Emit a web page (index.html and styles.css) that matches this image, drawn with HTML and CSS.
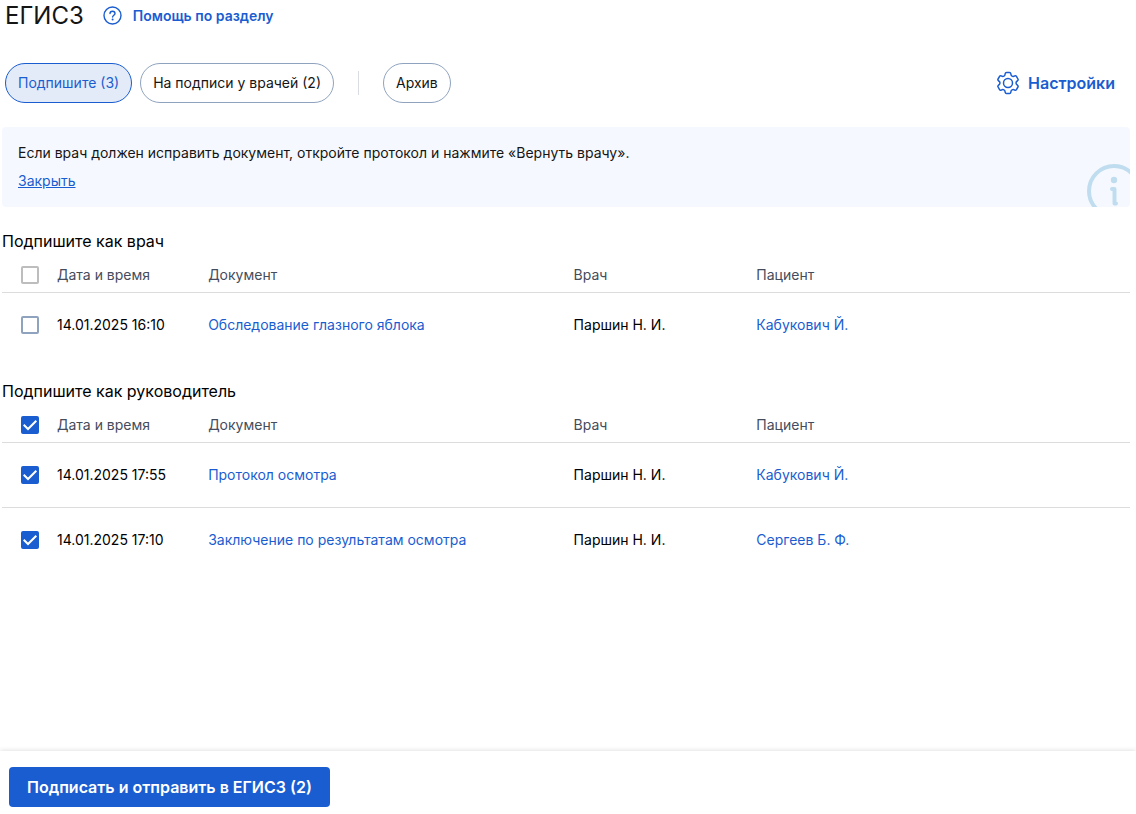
FILE: index.html
```html
<!DOCTYPE html>
<html lang="ru">
<head>
<meta charset="utf-8">
<meta name="viewport" content="width=device-width, initial-scale=1">
<title>ЕГИСЗ</title>
<link rel="stylesheet" href="styles.css">
</head>
<body>
<main class="content">
  <header class="page-head">
    <h1 class="title">ЕГИСЗ</h1>
    <a class="help" href="#help">
      <svg class="help-icon" viewBox="0 0 20 20" aria-hidden="true"><circle cx="9.500" cy="9.500" r="8.500"/><path d="M7 7.600C7 6.200 8.100 5.300 9.500 5.300s2.500.9 2.500 2.200c0 1.700-2.400 1.800-2.400 3.500"/><circle class="dot" cx="9.600" cy="13.500" r="1"/></svg>
      Помощь по разделу
    </a>
  </header>

  <div class="toolbar">
    <nav class="tabs">
      <button class="tab tab-active" type="button">Подпишите (3)</button>
      <button class="tab" type="button">На подписи у врачей (2)</button>
      <span class="divider"></span>
      <button class="tab" type="button">Архив</button>
    </nav>
    <button class="settings" type="button">
      <svg class="gear" viewBox="-12 -12 24 24" aria-hidden="true"><path d="M-1.500-10.600H1.500Q2.600-10.600 2.800-9.400 2.800-7.600 4-6.930 5.180-6.220 6.740-7.120 7.880-7.550 8.430-6.600L9.930-4Q10.480-3.050 9.540-2.270 7.980-1.370 8 0 7.980 1.370 9.540 2.270 10.480 3.050 9.930 4L8.430 6.600Q7.880 7.550 6.740 7.120 5.180 6.220 4 6.930 2.800 7.600 2.800 9.400 2.600 10.600 1.500 10.600H-1.500Q-2.600 10.600-2.800 9.400-2.800 7.600-4 6.930-5.180 6.220-6.740 7.120-7.880 7.550-8.430 6.600L-9.930 4Q-10.480 3.050-9.540 2.270-7.980 1.370-8 0-7.980-1.370-9.540-2.270-10.480-3.050-9.930-4L-8.430-6.600Q-7.880-7.550-6.740-7.120-5.180-6.220-4-6.930-2.800-7.600-2.800-9.400-2.600-10.600-1.500-10.600Z"/><circle r="4.500"/></svg>
      Настройки
    </button>
  </div>

  <section class="notice">
    <p class="notice-text">Если врач должен исправить документ, откройте протокол и нажмите «Вернуть врачу».</p>
    <a class="notice-close" href="#close">Закрыть</a>
    <svg class="notice-icon" viewBox="0 0 54 54" aria-hidden="true"><circle cx="27" cy="27" r="25"/><circle class="dot" cx="27" cy="16" r="3.200"/><path d="M25 25H27.500v14.500H29"/></svg>
  </section>

  <section class="group">
    <h2 class="group-title">Подпишите как врач</h2>
    <table class="docs">
      <colgroup><col class="col-check"><col class="col-date"><col class="col-doc"><col class="col-doctor"><col class="col-patient"></colgroup>
      <thead>
        <tr><th><input class="check" type="checkbox" disabled aria-label="Выбрать все документы врача"></th><th>Дата и время</th><th>Документ</th><th>Врач</th><th>Пациент</th></tr>
      </thead>
      <tbody>
        <tr><td><input class="check" type="checkbox" aria-label="Обследование глазного яблока"></td><td>14.01.2025 16:10</td><td><a class="link" href="#doc1">Обследование глазного яблока</a></td><td>Паршин Н. И.</td><td><a class="link" href="#patient1">Кабукович Й.</a></td></tr>
      </tbody>
    </table>
  </section>

  <section class="group">
    <h2 class="group-title">Подпишите как руководитель</h2>
    <table class="docs">
      <colgroup><col class="col-check"><col class="col-date"><col class="col-doc"><col class="col-doctor"><col class="col-patient"></colgroup>
      <thead>
        <tr><th><input class="check" type="checkbox" checked aria-label="Выбрать все документы руководителя"></th><th>Дата и время</th><th>Документ</th><th>Врач</th><th>Пациент</th></tr>
      </thead>
      <tbody>
        <tr><td><input class="check" type="checkbox" checked aria-label="Протокол осмотра"></td><td>14.01.2025 17:55</td><td><a class="link" href="#doc2">Протокол осмотра</a></td><td>Паршин Н. И.</td><td><a class="link" href="#patient1">Кабукович Й.</a></td></tr>
        <tr><td><input class="check" type="checkbox" checked aria-label="Заключение по результатам осмотра"></td><td>14.01.2025 17:10</td><td><a class="link" href="#doc3">Заключение по результатам осмотра</a></td><td>Паршин Н. И.</td><td><a class="link" href="#patient2">Сергеев Б. Ф.</a></td></tr>
      </tbody>
    </table>
  </section>
</main>
<footer class="footer">
  <button class="submit" type="button">Подписать и отправить в ЕГИСЗ (2)</button>
</footer>
</body>
</html>
```
FILE: styles.css
```css
* {
  box-sizing: border-box;
}

body {
  margin: 0;
  min-height: 100vh;
  display: flex;
  flex-direction: column;
  background: #fff;
  color: #000;
  font-family: Inter, "Liberation Sans", sans-serif;
  font-size: 14px;
  line-height: 20px;
}

button {
  font: inherit;
  cursor: pointer;
}

.content {
  flex: 1;
  padding: 0 6px 0 2px;
}

.page-head {
  display: flex;
  align-items: center;
  gap: 19px;
  height: 31px;
  padding-left: 3px;
}

.title {
  margin: 0;
  font-size: 24px;
  line-height: 30px;
  font-weight: 400;
  color: #151515;
}

.help {
  display: flex;
  align-items: center;
  gap: 10px;
  color: #1a5dd0;
  font-weight: 600;
  text-decoration: none;
}

.help-icon,
.gear,
.notice-icon {
  fill: none;
  stroke: currentColor;
  stroke-linecap: round;
  stroke-linejoin: round;
}

.help-icon {
  width: 20px;
  height: 20px;
  stroke-width: 1.4;
}

.dot {
  fill: currentColor;
  stroke: none;
}

.toolbar {
  display: flex;
  align-items: center;
  justify-content: space-between;
  margin-top: 32px;
  padding: 0 15px 0 3px;
}

.tabs {
  display: flex;
  align-items: center;
  gap: 8px;
}

.tab {
  height: 40px;
  padding: 0 12px;
  border: 1px solid #8fa3bf;
  border-radius: 20px;
  background: #fff;
  color: #151515;
}

.tab-active {
  border-color: #1a5dd0;
  background: #e3eaf8;
  color: #1a5dd0;
}

.divider {
  width: 1px;
  height: 24px;
  margin: 0 16px;
  background: #d9dce0;
}

.settings {
  display: flex;
  align-items: center;
  gap: 8px;
  padding: 0;
  border: 0;
  background: none;
  color: #1a5dd0;
  font-size: 16px;
  font-weight: 600;
}

.gear {
  width: 24px;
  height: 24px;
  stroke-width: 1.5;
}

.notice {
  position: relative;
  overflow: hidden;
  margin-top: 24px;
  padding: 16px;
  border-radius: 4px;
  background: #f5f9ff;
}

.notice-text {
  margin: 0 0 8px;
  color: #151515;
}

.notice-close {
  display: block;
  width: fit-content;
  color: #1a5dd0;
}

.notice-icon {
  position: absolute;
  right: -11px;
  bottom: -11px;
  width: 54px;
  height: 54px;
  color: #c0ddef;
  stroke-width: 4;
}

.group {
  margin-top: 22px;
}

.group-title {
  margin: 0 0 4px;
  font-size: 16px;
  line-height: 24px;
  font-weight: 400;
}

.docs {
  width: 100%;
  table-layout: fixed;
  border-collapse: separate;
  border-spacing: 0;
}

.col-check {
  width: 55px;
}

.col-date {
  width: 13.4%;
}

.col-doc {
  width: 32.4%;
}

.col-doctor {
  width: 16.2%;
}

.docs th,
.docs td {
  padding: 0;
  text-align: left;
  vertical-align: middle;
}

.docs th {
  height: 36px;
  border-bottom: 1px solid #dcdcdc;
  color: #454c5c;
  font-weight: 400;
}

.docs td {
  height: 65px;
  border-bottom: 1px solid #dcdcdc;
}

.docs tbody tr:last-child td {
  height: 64px;
  border-bottom: 0;
}

.link {
  color: #1a5dd0;
  text-decoration: none;
}

.check {
  appearance: none;
  display: block;
  width: 18px;
  height: 18px;
  margin: 0 0 0 19px;
  border: 2px solid #8fa3bf;
  border-radius: 2px;
  background: #fff;
}

.check:disabled {
  border-color: #bdbdbd;
}

.check:checked {
  border-color: #1a5dd0;
  background: #1a5dd0 url("data:image/svg+xml,%3Csvg xmlns='http://www.w3.org/2000/svg' viewBox='0 0 14 14'%3E%3Cpath d='M.700 6.800l4.300 4.200 8.300-8.300' fill='none' stroke='white' stroke-width='2'/%3E%3C/svg%3E") center / 14px 14px no-repeat;
}

.footer {
  padding: 16px 9px 7px;
  background: #fff;
  box-shadow: 0 0 5px rgba(0, 0, 0, 0.16);
}

.submit {
  height: 40px;
  padding: 0 18px;
  border: 0;
  border-radius: 4px;
  background: #1a5dd0;
  color: #fff;
  font-size: 16px;
  font-weight: 600;
  vertical-align: top;
}
```
